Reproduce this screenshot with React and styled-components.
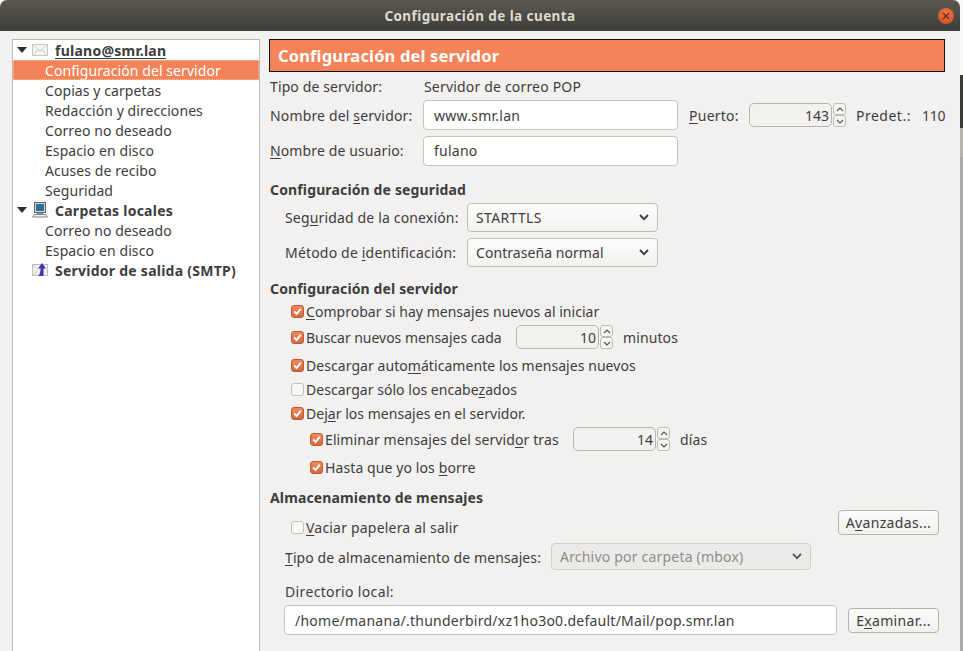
import React from 'react'
import styled, { createGlobalStyle } from 'styled-components'

const Global = createGlobalStyle`
html, body { margin: 0; padding: 0; background: #fff; overflow: hidden; }
body { font-family: "Noto Sans", "Open Sans", sans-serif; font-size: 14px; color: #3d3d3d; }
`

const Page = styled.div`
width: 963px;
height: 651px;
overflow: hidden;
display: flex;
`
const Win = styled.div`
width: 960px;
height: 651px;
flex: none;
background: #f2f1f0;
border-radius: 7px 7px 0 0;
overflow: hidden;
display: flex;
flex-direction: column;
`
// sliver of the desktop visible to the right of the window
const Desktop = styled.div`
flex: 1;
display: flex;
flex-direction: column;
`
const DesktopBand = styled.div`
height: ${p => (p.$h ? `${p.$h}px` : 'auto')};
flex: ${p => (p.$h ? 'none' : 1)};
background: ${p => p.$c};
`
const TitleBar = styled.div`
height: 31px;
flex: none;
background: linear-gradient(#5a5850, #3e3d38);
display: flex;
align-items: center;
justify-content: center;
position: relative;
color: #dfdbd2;
font-weight: 700;
font-size: 13.5px;
letter-spacing: 0.42px;
`
const CloseBtn = styled.div`
position: absolute;
right: 6px;
top: 8px;
width: 16px;
height: 16px;
border-radius: 50%;
background: radial-gradient(circle at 50% 35%, #f0784a, #c8481c);
display: flex;
align-items: center;
justify-content: center;
`
const Body = styled.div`
flex: 1;
display: flex;
padding: 8px 15px 0 12px;
gap: 9px;
min-height: 0;
`
const Tree = styled.div`
width: 246px;
flex: none;
background: #fff;
border: 1px solid #b9b8b3;
border-bottom: none;
letter-spacing: 0.08px;
`
const TreeRow = styled.div`
height: 20px;
display: flex;
align-items: center;
padding-left: ${p => p.$pad || 32}px;
white-space: nowrap;
box-sizing: border-box;
font-weight: ${p => (p.$bold ? 700 : 400)};
letter-spacing: ${p => (p.$bold ? '0.25px' : 'inherit')};
color: ${p => (p.$selected ? '#fff' : '#3d3d3d')};
background: ${p => (p.$selected ? '#f48358' : 'transparent')};
outline: ${p => (p.$selected ? '1px dotted #f9c08f' : 'none')};
outline-offset: -1px;
`
const Arrow = styled.span`
width: 0;
height: 0;
margin: 0 5px 0 3px;
border-left: 5px solid transparent;
border-right: 5px solid transparent;
border-top: 6px solid #2e2e2e;
`
const IconSlot = styled.span`
width: 16px;
height: 16px;
display: flex;
margin-right: 7px;
`
const Panel = styled.div`
flex: 1;
min-width: 0;
display: flex;
flex-direction: column;
`
const Banner = styled.div`
height: 31px;
flex: none;
background: #f48358;
border: 1px solid #111;
color: #fff;
font-weight: 700;
font-size: 16.5px;
letter-spacing: 0.15px;
display: flex;
align-items: center;
padding-left: 8px;
`
const Row = styled.div`
display: flex;
align-items: center;
flex: none;
height: ${p => p.$h}px;
margin-top: ${p => p.$mt || 0}px;
padding-left: ${p => p.$indent || 0}px;
white-space: nowrap;
`
// checkbox and label that sit lower than the button sharing their row
const DroppedCheck = styled.div`
display: flex;
align-items: center;
margin-top: 10px;
`
const Label = styled.span`
width: ${p => (p.$w ? `${p.$w}px` : 'auto')};
flex: none;
box-sizing: border-box;
margin-left: ${p => p.$ml || 0}px;
padding-top: ${p => p.$pt || 0}px;
padding-bottom: ${p => p.$pb || 0}px;
letter-spacing: ${p => p.$ls || 0}px;
`
const Heading = styled.div`
font-weight: 700;
flex: none;
height: 20px;
line-height: 20px;
padding-left: 1px;
letter-spacing: 0.14px;
margin-top: ${p => p.$mt || 0}px;
`
const Mn = styled.span`
text-decoration: underline;
text-underline-offset: 2px;
`
const Field = styled.div`
box-sizing: border-box;
height: 30px;
width: ${p => p.$w}px;
flex: none;
background: #fff;
border: 1px solid #c3c2bd;
border-radius: 4px;
padding: 0 10px ${p => p.$pb || 0}px;
letter-spacing: 0.25px;
display: flex;
align-items: center;
color: #3d3d3d;
`
const SpinValue = styled.div`
box-sizing: border-box;
width: ${p => p.$w}px;
height: 24px;
flex: none;
display: flex;
align-items: center;
justify-content: flex-end;
padding-right: 2px;
background: #f2f1f0;
border: 1px solid #b4b3ae;
border-radius: 5px;
`
const SpinCol = styled.div`
width: 13px;
height: 24px;
flex: none;
margin-left: 1px;
display: flex;
flex-direction: column;
`
const SpinBtn = styled.div`
flex: 1;
border: 1px solid #bcbbb6;
border-radius: 3px;
background: #f6f5f4;
display: flex;
align-items: center;
justify-content: center;
`
const Select = styled.div`
box-sizing: border-box;
width: ${p => p.$w}px;
height: ${p => p.$h || 29}px;
flex: none;
border: 1px solid ${p => (p.$disabled ? '#cfcec9' : '#bdbcb7')};
border-radius: 4px;
background: ${p => (p.$disabled ? '#ebeae8' : 'linear-gradient(#fbfbfa, #f3f2f1)')};
color: ${p => (p.$disabled ? '#8e8e8a' : '#3d3d3d')};
letter-spacing: ${p => p.$ls || 0}px;
display: flex;
align-items: center;
justify-content: space-between;
padding: 0 8px;
`
const Box = styled.span`
box-sizing: border-box;
width: 13px;
height: 13px;
flex: none;
margin-right: 2px;
border-radius: 3px;
border: 1px solid ${p => (p.$on ? '#b85a35' : '#c0bfba')};
background: ${p => (p.$on ? 'linear-gradient(#f08a5e, #d9683c)' : '#f8f8f7')};
display: flex;
align-items: center;
justify-content: center;
`
const Button = styled.div`
box-sizing: border-box;
width: ${p => p.$w}px;
height: 25px;
flex: none;
border: 1px solid #b4b3ae;
border-radius: 4px;
background: linear-gradient(#fbfbfa, #f1f0ef);
letter-spacing: 0.33px;
display: flex;
align-items: center;
justify-content: center;
margin-right: 6px;
`
const Spacer = styled.div`
flex: 1;
`

const Chevron = ({ disabled }) => (
  <svg width="10" height="7" viewBox="0 0 10 7">
    <path d="M1 1 L5 5.2 L9 1" fill="none" stroke={disabled ? '#5f5f5c' : '#3d3d3d'} strokeWidth="1.9" />
  </svg>
)

const Spin = ({ w, value }) => (
  <>
    <SpinValue $w={w}>{value}</SpinValue>
    <SpinCol>
      <SpinBtn>
        <svg width="8" height="5" viewBox="0 0 8 5"><path d="M1 4 L4 1 L7 4" fill="none" stroke="#55554f" strokeWidth="1.1" /></svg>
      </SpinBtn>
      <SpinBtn>
        <svg width="8" height="5" viewBox="0 0 8 5"><path d="M1 1 L4 4 L7 1" fill="none" stroke="#55554f" strokeWidth="1.1" /></svg>
      </SpinBtn>
    </SpinCol>
  </>
)

const Check = ({ on }) => (
  <Box $on={on}>
    {on && (
      <svg width="11" height="11" viewBox="0 0 11 11">
        <path d="M2.2 5.5 L4.6 8 L8.8 2.6" fill="none" stroke="#fff" strokeWidth="1.9" />
      </svg>
    )}
  </Box>
)

const MailIcon = () => (
  <svg width="16" height="16" viewBox="0 0 16 16">
    <rect x="0.5" y="2.5" width="15" height="11" fill="#f5f5f3" stroke="#c6c6c2" />
    <path d="M1 3.5 L8 9 L15 3.5 M1.5 13 L6 7.5 M14.5 13 L10 7.5" fill="none" stroke="#cfcfcb" />
  </svg>
)

const ComputerIcon = () => (
  <svg width="16" height="16" viewBox="0 0 16 16">
    <rect x="2.5" y="0.5" width="11" height="10" fill="#d4d8da" stroke="#5b6468" />
    <rect x="4" y="2" width="8" height="7" fill="#2f6f9e" />
    <rect x="5" y="11" width="6" height="1" fill="#8a8c8e" />
    <path d="M2 12.5 H14 L15.5 15 H0.5 Z" fill="#ecece9" stroke="#8a8c8e" />
  </svg>
)

const SmtpIcon = () => (
  <svg width="16" height="16" viewBox="0 0 16 16">
    <rect x="0.5" y="2.5" width="15" height="11" fill="#f1f1ef" stroke="#bdbdb9" />
    <path d="M1 3.5 L6 8 M1.5 13 L5 9" fill="none" stroke="#c9c9c5" />
    <path d="M10 1 L14 6.5 L11.5 6.5 L11.5 14 L6.5 14 C8 12 8.6 9 8.6 6.5 L6 6.5 Z" fill="#4a2fa8" />
  </svg>
)

export default function App() {
  return (
    <Page>
      <Global />
      <Win>
        <TitleBar>
          Configuración de la cuenta
          <CloseBtn>
            <svg width="8" height="8" viewBox="0 0 8 8"><path d="M1 1 L7 7 M7 1 L1 7" stroke="#5a2a14" strokeWidth="1.3" /></svg>
          </CloseBtn>
        </TitleBar>
        <Body>
          <Tree>
            <TreeRow $pad={1} $bold>
              <Arrow />
              <IconSlot><MailIcon /></IconSlot>
              <Mn>fulano@smr.lan</Mn>
            </TreeRow>
            <TreeRow $selected>Configuración del servidor</TreeRow>
            <TreeRow>Copias y carpetas</TreeRow>
            <TreeRow>Redacción y direcciones</TreeRow>
            <TreeRow>Correo no deseado</TreeRow>
            <TreeRow>Espacio en disco</TreeRow>
            <TreeRow>Acuses de recibo</TreeRow>
            <TreeRow>Seguridad</TreeRow>
            <TreeRow $pad={1} $bold>
              <Arrow />
              <IconSlot><ComputerIcon /></IconSlot>
              Carpetas locales
            </TreeRow>
            <TreeRow>Correo no deseado</TreeRow>
            <TreeRow>Espacio en disco</TreeRow>
            <TreeRow $pad={19} $bold>
              <IconSlot><SmtpIcon /></IconSlot>
              Servidor de salida (SMTP)
            </TreeRow>
          </Tree>
          <Panel>
            <Banner>Configuración del servidor</Banner>
            <Row $h={20} $mt={4} $indent={1}>
              <Label $w={154} $ls={0.12}>Tipo de servidor:</Label>
              <Label $ls={0.18}>Servidor de correo POP</Label>
            </Row>
            <Row $h={30} $mt={4} $indent={1}>
              <Label $w={153} $ls={0.15}>Nombre del <Mn>s</Mn>ervidor:</Label>
              <Field $w={255}>www.smr.lan</Field>
              <Label $ml={11} $w={60} $ls={0.25}><Mn>P</Mn>uerto:</Label>
              <Spin w={83} value="143" />
              <Label $ml={10} $w={66} $ls={0.5}>Predet.:</Label>
              <Label $ls={-0.2}>110</Label>
            </Row>
            <Row $h={30} $mt={6} $indent={1}>
              <Label $w={153} $ls={0.12} $pb={2}><Mn>N</Mn>ombre de usuario:</Label>
              <Field $w={255} $pb={2}>fulano</Field>
            </Row>
            <Heading $mt={14}>Configuración de seguridad</Heading>
            <Row $h={29} $mt={3} $indent={16}>
              <Label $w={182} $ls={0.16}>Seg<Mn>u</Mn>ridad de la conexión:</Label>
              <Select $w={191} $ls={0.35}>STARTTLS<Chevron /></Select>
            </Row>
            <Row $h={29} $mt={6} $indent={16}>
              <Label $w={182} $ls={0.18}>Método de <Mn>i</Mn>dentificación:</Label>
              <Select $w={191} $ls={0.06}>Contraseña normal<Chevron /></Select>
            </Row>
            <Heading $mt={12}>Configuración del servidor</Heading>
            <Row $h={20} $mt={2} $indent={22}>
              <Check on /><Label $ls={0.03}><Mn>C</Mn>omprobar si hay mensajes nuevos al iniciar</Label>
            </Row>
            <Row $h={24} $mt={4} $indent={22}>
              <Check on /><Label $w={210} $ls={-0.03}>Buscar nuevos mensa<Mn>j</Mn>es cada</Label>
              <Spin w={83} value="10" />
              <Label $ml={10} $ls={0.1}>minutos</Label>
            </Row>
            <Row $h={20} $mt={6} $indent={22}>
              <Check on /><Label $ls={0.06}>Descargar auto<Mn>m</Mn>áticamente los mensajes nuevos</Label>
            </Row>
            <Row $h={20} $mt={4} $indent={22}>
              <Check /><Label $ls={0.03}>Descargar sólo los encabe<Mn>z</Mn>ados</Label>
            </Row>
            <Row $h={20} $mt={4} $indent={22}>
              <Check on /><Label $ls={0.03}>Dej<Mn>a</Mn>r los mensajes en el servidor.</Label>
            </Row>
            <Row $h={24} $mt={4} $indent={41}>
              <Check on /><Label $w={248} $ls={0.1}>Eliminar mensajes del servid<Mn>o</Mn>r tras</Label>
              <Spin w={83} value="14" />
              <Label $ml={10} $ls={0.1}>días</Label>
            </Row>
            <Row $h={20} $mt={6} $indent={41}>
              <Check on /><Label $ls={0.1}>Hasta que yo los <Mn>b</Mn>orre</Label>
            </Row>
            <Heading $mt={11}>Almacenamiento de mensajes</Heading>
            <Row $h={25} $mt={2} $indent={22}>
              <DroppedCheck>
                <Check /><Label $ls={0.2}><Mn>V</Mn>aciar papelera al salir</Label>
              </DroppedCheck>
              <Spacer />
              <Button $w={101}>A<Mn>v</Mn>anzadas...</Button>
            </Row>
            <Row $h={27} $mt={8} $indent={16}>
              <Label $w={266} $ls={0.1} $pt={2}><Mn>T</Mn>ipo de almacenamiento de mensajes:</Label>
              <Select $w={260} $h={27} $ls={0.2} $disabled>Archivo por carpeta (mbox)<Chevron disabled /></Select>
            </Row>
            <Row $h={20} $mt={11} $indent={16}>
              <Label $ls={0.35}>Directorio local:</Label>
            </Row>
            <Row $h={30} $mt={4} $indent={15}>
              <Field $w={553}>/home/manana/.thunderbird/xz1ho3o0.default/Mail/pop.smr.lan</Field>
              <Spacer />
              <Button $w={91}>E<Mn>x</Mn>aminar...</Button>
            </Row>
          </Panel>
        </Body>
      </Win>
      <Desktop>
        <DesktopBand $h={75} $c="#f7f7f7" />
        <DesktopBand $h={53} $c="#3c3b37" />
        <DesktopBand $h={29} $c="#b5b3ab" />
        <DesktopBand $c="#a9a9a9" />
      </Desktop>
    </Page>
  )
}
